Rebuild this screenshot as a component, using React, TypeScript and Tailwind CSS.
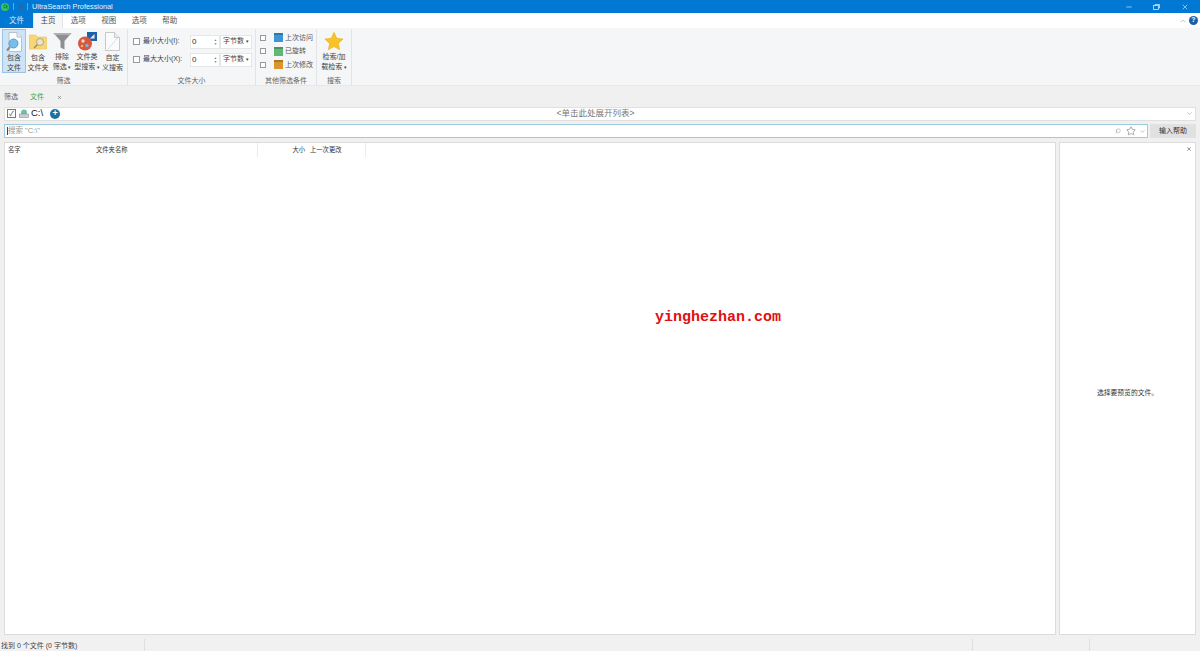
import { ChevronDown, ChevronUp, Minus, Search, Star, X } from 'lucide-react'

const FONT = 'font-["Liberation_Sans","Noto_Sans_CJK_SC",sans-serif]'

const MENU = ['选项', '视图', '选项', '帮助']

function PageIcon() {
  return (
    <svg width="18" height="20" viewBox="0 0 18 20">
      <path d="M4 .5h8l4.500 4.500v14.500H4z" fill="#fbfdff" stroke="#b9c2cc" />
      <path d="M12 .5V5h4.500" fill="#e4eaf0" stroke="#b9c2cc" />
      <circle cx="8.500" cy="11.500" r="4.500" fill="#79bdec" stroke="#5a9ccc" />
      <path d="M5 15 2 18.500" stroke="#7d8a94" strokeWidth="2" />
    </svg>
  )
}

function FolderIcon() {
  return (
    <svg width="18" height="18" viewBox="0 0 18 18">
      <path d="M.5 2h6l2 2h9v12H.5z" fill="#f8d772" stroke="#e8bf55" strokeWidth="0.600" />
      <circle cx="11" cy="9" r="3.500" fill="#ece6c6" stroke="#aba68c" />
      <path d="M8.500 11.500 5 15" stroke="#938c70" strokeWidth="1.500" />
    </svg>
  )
}

function FunnelIcon() {
  return (
    <svg width="19" height="18" viewBox="0 0 19 18">
      <path d="M.5 1h18l-7 8v8.500l-4-2V9z" fill="#8d8f92" />
      <path d="M.5 1h18l-1.500 2H2z" fill="#aeb0b2" />
    </svg>
  )
}

function FileTypeIcon() {
  return (
    <svg width="21" height="19" viewBox="0 0 21 19">
      <rect x="10" y="0" width="10" height="9" fill="#1f5fa8" />
      <path d="M13 6.500 17.500 2v4.500z" fill="#e8f0f8" />
      <circle cx="8" cy="11.500" r="7" fill="#d9573f" />
      <circle cx="6" cy="9" r="1.700" fill="#f6d7c8" />
      <circle cx="10" cy="13.500" r="1.700" fill="#7fb2dc" />
      <circle cx="5" cy="14" r="1.200" fill="#f3c04d" />
    </svg>
  )
}

function CustomIcon() {
  return (
    <svg width="15" height="19" viewBox="0 0 15 19">
      <path d="M.5.500h9l5 5v13H.5z" fill="#fbfbfb" stroke="#c8c8c8" />
      <path d="M9.500.500v5h5" fill="#ececec" stroke="#c8c8c8" />
      <path d="M3 17 12.500 6" stroke="#d0d0d0" strokeDasharray="2 1" />
    </svg>
  )
}

function RibbonButton({ icon, lines, active, arrow, width }: { icon: React.ReactNode; lines: string[]; active?: boolean; arrow?: boolean; width: string }) {
  return (
    <div className={`${width} h-[44px] flex flex-col items-center border ${active ? 'bg-[#cde4f7] border-[#9cc3e3]' : 'border-transparent'}`}>
      <div className="h-[23px] flex items-center justify-center">{icon}</div>
      <div className="text-[7px] leading-[9.500px] text-[#444] text-center whitespace-nowrap">
        <div>{lines[0]}</div>
        <div>{lines[1]}{arrow && <span className="text-[5px]"> ▾</span>}</div>
      </div>
    </div>
  )
}

function Group({ label, width, children }: { label: string; width: string; children: React.ReactNode }) {
  return (
    <div className={`${width} h-full flex flex-col border-r border-[#e2e3e4]`}>
      <div className="flex-1 min-h-0">{children}</div>
      <div className="h-[12px] text-[7px] leading-[15px] text-center text-[#666]">{label}</div>
    </div>
  )
}

function SizeRow({ label }: { label: string }) {
  return (
    <div className="h-[15px] flex items-center">
      <span className="w-[7px] h-[7px] ml-[5px] border border-[#999] bg-white" />
      <span className="ml-[3px] w-[47px] text-[7px] text-[#444] whitespace-nowrap">{label}</span>
      <div className="w-[30px] h-[14px] bg-white border border-[#e6e6e6] flex items-center justify-between px-[1px] text-[8px] text-[#333]">
        <span>0</span>
        <span className="flex flex-col text-[#666] text-[3px] leading-[4px] mr-[1px]"><span>▲</span><span>▼</span></span>
      </div>
      <div className="w-[32px] h-[14px] bg-white border border-[#e6e6e6] flex items-center justify-center text-[7px] text-[#444] whitespace-nowrap">
        字节数<span className="text-[5px] ml-[2px]">▾</span>
      </div>
    </div>
  )
}

function DateRow({ label, color }: { label: string; color: string }) {
  return (
    <div className="h-[13.500px] flex items-center">
      <span className="w-[6px] h-[6px] ml-[4px] border border-[#999] bg-white" />
      <span className={`w-[9px] h-[9px] ml-[8px] border-t-2 border-[#00000033] ${color}`} />
      <span className="ml-[2px] text-[7px] text-[#555] whitespace-nowrap">{label}</span>
    </div>
  )
}

function Ribbon() {
  return (
    <div className="h-[58px] bg-[#f5f6f7] flex border-b border-[#e8e8e8] pt-[1px]">
      <Group label="筛选" width="w-[128px]">
        <div className="flex pl-[2px]">
          <RibbonButton width="w-[24px]" icon={<PageIcon />} lines={['包含', '文件']} active />
          <RibbonButton width="w-[24px]" icon={<FolderIcon />} lines={['包含', '文件夹']} />
          <RibbonButton width="w-[24px]" icon={<FunnelIcon />} lines={['排除', '筛选']} arrow />
          <RibbonButton width="w-[26px]" icon={<FileTypeIcon />} lines={['文件类', '型搜索']} arrow />
          <RibbonButton width="w-[25px]" icon={<CustomIcon />} lines={['自定', '义搜索']} />
        </div>
      </Group>
      <Group label="文件大小" width="w-[128px]">
        <div className="flex flex-col gap-[3px] pt-[5px]">
          <SizeRow label="最小大小(I):" />
          <SizeRow label="最大大小(X):" />
        </div>
      </Group>
      <Group label="其他筛选条件" width="w-[61px]">
        <div className="flex flex-col pt-[2px]">
          <DateRow label="上次访问" color="bg-[#3c96d6]" />
          <DateRow label="已旋转" color="bg-[#5fb878]" />
          <DateRow label="上次修改" color="bg-[#d9952e]" />
        </div>
      </Group>
      <Group label="搜索" width="w-[35px]">
        <div className="flex flex-col items-center pt-[2px]">
          <svg width="20" height="20" viewBox="0 0 24 24">
            <path d="M12 1.500 15.300 8.700 23 9.600 17.300 14.900 18.800 22.500 12 18.700 5.200 22.500 6.700 14.900 1 9.600 8.700 8.700z" fill="#f7c325" stroke="#e3a712" strokeWidth="0.600" />
          </svg>
          <div className="text-[7px] leading-[9.500px] text-[#444] text-center whitespace-nowrap mt-[1px]">
            <div>检索/加</div>
            <div>载检索<span className="text-[5px]"> ▾</span></div>
          </div>
        </div>
      </Group>
    </div>
  )
}

export default function App() {
  return (
    <div className={`${FONT} w-[1200px] h-[651px] overflow-hidden flex flex-col bg-[#f0f0f0] relative`}>
      {/* title bar */}
      <div className="h-[13px] bg-[#0078d4] flex items-center text-white shrink-0">
        <div className="w-[8px] h-[8px] ml-[1px] rounded-full bg-[#35c26b] flex items-center justify-center">
          <Search size={5} strokeWidth={3} className="text-[#0b5b2c]" />
        </div>
        <span className="w-px h-[7px] ml-[4px] bg-[#5aa7e3]" />
        <span className="w-[4px] h-[4px] ml-[5px] bg-[#2a66a0]" />
        <span className="w-px h-[7px] ml-[4px] bg-[#5aa7e3]" />
        <span className="ml-[4px] pt-[2px] text-[7.300px] text-[#e6f2fb]">UltraSearch Professional</span>
        <div className="ml-auto flex items-center text-[#cfe6f7]">
          <Minus size={8} className="mr-[20px]" />
          <svg width="7" height="6" viewBox="0 0 7 6" className="mr-[21px]" fill="none" stroke="currentColor" strokeWidth="0.800">
            <rect x="0.500" y="1.500" width="5" height="4" />
            <path d="M2 1.500V.5h4.500v3.500h-1" />
          </svg>
          <X size={8} className="mr-[11px]" />
        </div>
      </div>

      {/* menu tabs */}
      <div className="h-[15px] bg-white flex items-center shrink-0 text-[7.500px] text-[#444]">
        <div className="w-[33px] h-full bg-[#0078d4] text-[#dcecf9] flex items-center justify-center">文件</div>
        <div className="w-[30px] h-full bg-[#f5f6f7] border-x border-[#e4e4e4] flex items-center justify-center">主页</div>
        {MENU.map((m, i) => (
          <div key={i} className="w-[30.500px] text-center text-[#555]">{m}</div>
        ))}
        <div className="ml-auto flex items-center mr-[2px]">
          <ChevronUp size={8} className="text-[#aaa] mr-[2px]" />
          <span className="w-[9px] h-[9px] rounded-full bg-[#1b5fa8] text-white text-[7px] font-bold flex items-center justify-center">?</span>
        </div>
      </div>

      <Ribbon />

      {/* filter tabs */}
      <div className="h-[21px] flex items-center text-[7px] shrink-0 pt-[2px]">
        <span className="ml-[4px] text-[#666]">筛选</span>
        <span className="ml-[12px] text-[#3fa63f]">文件</span>
        <X size={5} strokeWidth={3} className="ml-[13px] text-[#777]" />
      </div>

      {/* location bar */}
      <div className="h-[14px] mx-[4px] pb-[1px] bg-white border border-[#e0e0e0] flex items-center shrink-0 relative">
        <span className="w-[9px] h-[9px] ml-[2px] border border-[#777] flex items-center justify-center text-[7px] leading-none text-[#444]">✓</span>
        <svg width="10" height="9" viewBox="0 0 10 9" className="ml-[3px]">
          <circle cx="5" cy="3.500" r="3" fill="#6fc0a8" />
          <rect x="0.500" y="5" width="9" height="3.500" fill="#c9ced6" stroke="#7a8088" strokeWidth="0.500" />
        </svg>
        <span className="ml-[2px] text-[9.500px] text-[#111]">C:\</span>
        <span className="w-[10px] h-[10px] ml-[7px] rounded-full bg-[#1f6f9f] text-white text-[9px] leading-[9px] font-bold text-center">+</span>
        <span className="flex-1 text-center text-[8.500px] text-[#777] pr-[55px]">&lt;单击此处展开列表&gt;</span>
        <ChevronDown size={7} className="mr-[2px] text-[#999]" />
      </div>

      {/* search bar */}
      <div className="h-[14px] mt-[3px] mx-[4px] flex shrink-0 gap-[2px]">
        <div className="flex-1 h-full bg-white border border-[#9ccbe0] flex items-center">
          <span className="w-px h-[8px] ml-[2px] bg-[#444]" />
          <span className="text-[7.500px] text-[#999]">搜索 "C:\"</span>
          <div className="ml-auto flex items-center text-[#999]">
            <Search size={6} className="-scale-x-100" />
            <Star size={10} className="ml-[5px]" />
            <ChevronDown size={7} className="ml-[3px] mr-[1px] text-[#7fa9c0]" />
          </div>
        </div>
        <div className="w-[46px] h-full bg-[#e1e1e1] text-[7px] text-[#333] flex items-center justify-center">输入帮助</div>
      </div>

      {/* list + preview */}
      <div className="flex-1 min-h-0 flex mt-[4px] mx-[4px] gap-[3px] mb-[4px]">
        <div className="flex-1 bg-white border border-[#dcdcdc]">
          <div className="h-[14px] flex items-center text-[6.300px] text-[#333]">
            <div className="w-[88px] pl-[3px]">名字</div>
            <div className="w-[165px] h-full flex items-center border-r border-[#ececec] pl-[3px]">文件夹名称</div>
            <div className="w-[48px] h-full text-right pr-[1px] leading-[14px]">大小</div>
            <div className="w-[60px] h-full flex items-center border-r border-[#ececec] pl-[4px]">上一次更改</div>
          </div>
        </div>
        <div className="w-[137px] bg-white border border-[#dcdcdc] flex flex-col">
          <div className="h-[12px] flex justify-end items-center pr-[3px]">
            <X size={6} strokeWidth={3} className="text-[#777]" />
          </div>
          <div className="flex-1 flex items-center justify-center pb-[3px] text-[6.800px] text-[#333]">选择要预览的文件。</div>
        </div>
      </div>

      {/* status bar */}
      <div className="h-[12px] flex items-center text-[7px] text-[#444] shrink-0 bg-[#f1f1f1]">
        <div className="w-[145px] h-full pl-[1px] border-r border-[#e0e0e0] leading-[13px]">找到 0 个文件 (0 字节数)</div>
        <div className="w-[828px] h-full border-r border-[#e0e0e0]" />
        <div className="w-[117px] h-full border-r border-[#e0e0e0]" />
      </div>

      {/* watermark */}
      <div className="absolute left-[655px] top-[309px] text-[15px] leading-[17px] font-bold text-[#e01010] font-['Liberation_Mono',monospace]">
        yinghezhan.com
      </div>
    </div>
  )
}
